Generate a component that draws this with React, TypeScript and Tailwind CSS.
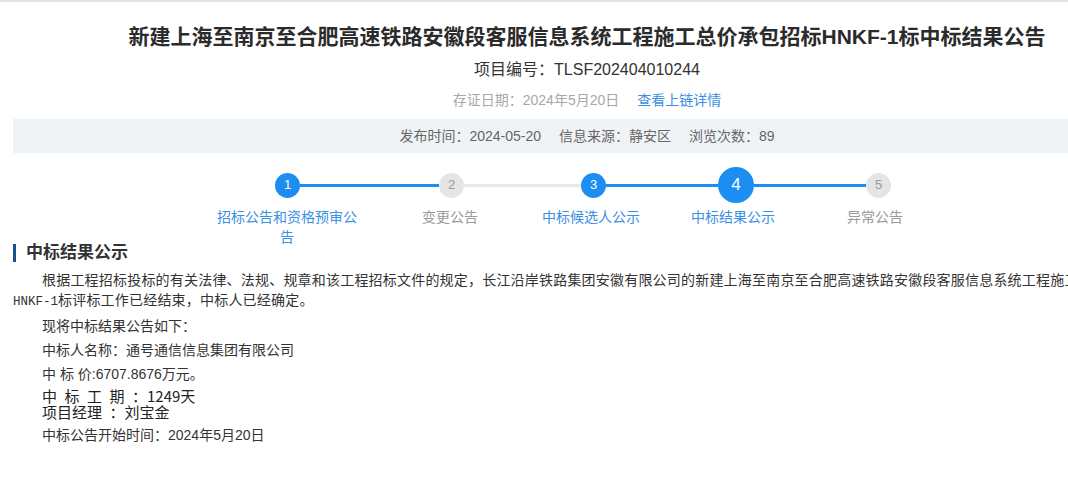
import { FC } from "react";

type Step = { no: number; label: string; done: boolean; current?: boolean };

const steps: Step[] = [
    { no: 1, label: "招标公告和资格预审公告", done: true },
    { no: 2, label: "变更公告", done: false },
    { no: 3, label: "中标候选人公示", done: true },
    { no: 4, label: "中标结果公示", done: true, current: true },
    { no: 5, label: "异常公告", done: false },
];

// segment i sits between step i-1 and step i, coloured by the step it leaves
const lineWidths = ["w-[139px]", "w-[117px]", "w-[112px]", "w-[112px]"];
const labelOffsets = ["ml-[204px] w-[140px]", "ml-[43px] w-[100px]", "ml-[41px] w-[100px]", "ml-[42px] w-[100px]", "ml-[42px] w-[100px]"];

const StepCircle: FC<{ step: Step }> = ({ step }) => {
    if (step.current) {
        return (
            <div className="flex h-[36px] w-[36px] shrink-0 items-center justify-center rounded-full bg-[#1c8ef2] text-[17px] text-white">
                {step.no}
            </div>
        );
    }
    return (
        <div
            className={
                step.done
                    ? "flex h-[25px] w-[25px] shrink-0 items-center justify-center rounded-full bg-[#1c8ef2] text-[13px] text-white"
                    : "flex h-[25px] w-[25px] shrink-0 items-center justify-center rounded-full bg-[#e5e5e5] text-[13px] text-[#9a9a9a]"
            }
        >
            {step.no}
        </div>
    );
};

const Steps: FC = () => (
    <div className="mt-[14px] h-[77px]">
        <div className="ml-[262px] flex h-[36px] items-center">
            {steps.map((step, i) => (
                <div key={step.no} className="flex items-center">
                    {i > 0 && (
                        <div className={`h-[3px] ${lineWidths[i - 1]} ${steps[i - 1].done ? "bg-[#1c8ef2]" : "bg-[#e8e8e8]"}`} />
                    )}
                    <StepCircle step={step} />
                </div>
            ))}
        </div>
        <div className="mt-[4px] flex">
            {steps.map((step, i) => (
                <div
                    key={step.no}
                    className={`${labelOffsets[i]} text-center text-[14px] leading-[20px] ${step.done ? "text-[#3b8fe4]" : "text-[#9a9a9a]"}`}
                >
                    {step.label}
                </div>
            ))}
        </div>
    </div>
);

export default function App() {
    return (
        <div className="w-full overflow-hidden bg-white font-['Liberation_Sans','Noto_Sans_CJK_SC',sans-serif] text-[#333]">
            <div className="border-t-2 border-[#e3e3e3]" />
            <div className="ml-[13px] w-[1148px] pb-10">
                <h1 className="mt-[20px] text-center text-[21px] font-bold leading-[30px] text-[#2b2b2b]">
                    新建上海至南京至合肥高速铁路安徽段客服信息系统工程施工总价承包招标HNKF-1标中标结果公告
                </h1>
                <div className="mt-[6px] text-center text-[16px] leading-[24px] text-[#333]">项目编号：TLSF202404010244</div>
                <div className="mt-[8px] flex justify-center gap-[18px] text-[14px] leading-[20px]">
                    <span className="text-[#a8a8a8]">存证日期：2024年5月20日</span>
                    <span className="text-[#3b8fe4]">查看上链详情</span>
                </div>
                <div className="mt-[9px] flex h-[34px] items-center justify-center gap-[18px] bg-[#f0f3f6] text-[14px] text-[#666]">
                    <span>发布时间：2024-05-20</span>
                    <span>信息来源：静安区</span>
                    <span>浏览次数：89</span>
                </div>

                <Steps />

                <div className="flex h-[18px] items-center">
                    <div className="h-[18px] w-[3px] bg-[#1d4f8a]" />
                    <h2 className="ml-[10px] text-[17px] font-bold leading-[18px] text-[#333]">中标结果公示</h2>
                </div>

                <div className="text-[14px] leading-[20px] text-[#333]">
                    <p className="mt-[8px] -mr-[24px] indent-[29px] tracking-[0.2px]">
                        根据工程招标投标的有关法律、法规、规章和该工程招标文件的规定，长江沿岸铁路集团安徽有限公司的新建上海至南京至合肥高速铁路安徽段客服信息系统工程施工总价承包招标
                        <wbr />
                        <span className="font-['Liberation_Mono',monospace] text-[12.5px] tracking-normal">HNKF-1</span>
                        标评标工作已经结束，中标人已经确定。
                    </p>
                    <p className="mt-[4px] pl-[29px]">现将中标结果公告如下：</p>
                    <p className="mt-[4px] pl-[29px]">中标人名称：通号通信信息集团有限公司</p>
                    <p className="mt-[4px] pl-[29px]">中 标 价:6707.8676万元。</p>
                    <p className="mt-[4px] pl-[29px] font-['Noto_Sans_CJK_SC',sans-serif] text-[15px] leading-[16px] text-[#222]">
                        {"中\u2002标\u2002工\u2002期\u2002：1249天"}
                        <br />
                        {"项目经理\u2002：刘宝金"}
                    </p>
                    <p className="mt-[5px] pl-[29px]">中标公告开始时间：2024年5月20日</p>
                </div>
            </div>
        </div>
    );
}
